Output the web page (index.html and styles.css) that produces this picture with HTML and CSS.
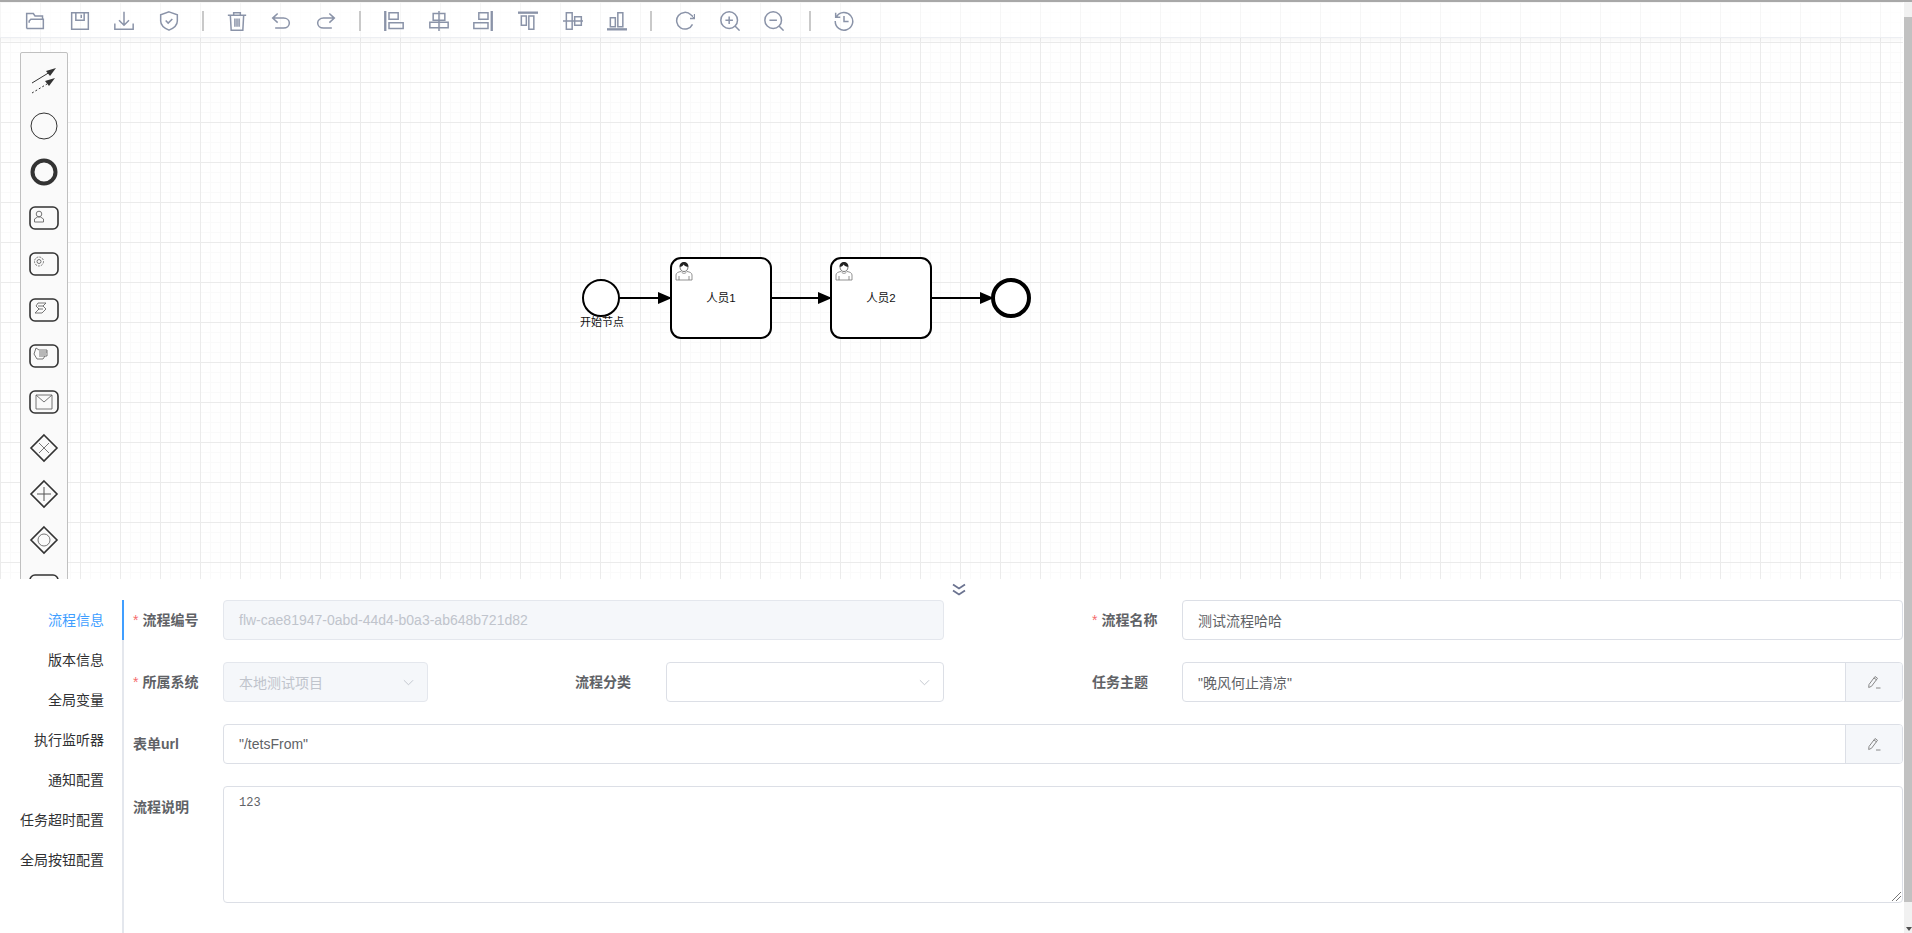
FILE: index.html
```html
<!DOCTYPE html>
<html lang="zh">
<head>
<meta charset="utf-8">
<title>流程设计器</title>
<link rel="stylesheet" href="styles.css">
</head>
<body>
<svg class="defs" width="0" height="0">
  <defs>
    <symbol id="person" viewBox="0 0 20 20">
      <path d="M2 19v-5c0-2 2-3 5-3.500M18 19v-5c0-2-2-3-5-3.500M5 19v-4M15 19v-4M2 19h16" fill="none" stroke="#777" stroke-width=".8"/>
      <path d="M7 10.500c2 2.500 4 2.500 6 0" fill="none" stroke="#777" stroke-width=".8"/>
      <path d="M5.500 6c0-3.500 2-5 4.500-5s4.500 1.500 4.500 5c-2 0-4-1-5-2.500C9 5 7.500 6 5.500 6z" fill="#222"/>
      <path d="M6 6c0 3 2 4.500 4 4.500s4-1.500 4-4.500" fill="none" stroke="#555" stroke-width=".8"/>
    </symbol>
  </defs>
</svg>
<div class="app">
  <div class="content">
    <main class="canvas">
      <div class="toolbar">
        <svg class="tool" viewBox="0 0 24 24"><path d="M2 21V3h8l2 3h9v4M2 21h20V10H7l-2 2v2M2 3"/></svg>
        <svg class="tool" viewBox="0 0 24 24"><path d="M2 2h20v20H2zM7 2v9h10V2M13.500 4.500v4"/></svg>
        <svg class="tool" viewBox="0 0 24 24"><path d="M12 1v16M6 11l6 6 6-6M1 15v7h22v-7"/></svg>
        <svg class="tool" viewBox="0 0 24 24"><path d="M12 1l10 3.500V12c0 5-4 8.500-10 11C6 20.500 2 17 2 12V4.500zM8 11.500l3 3 5-5"/></svg>
        <span class="sep"></span>
        <svg class="tool" viewBox="0 0 24 24"><path d="M1 5h22M8 5V2h8v3M4 5l1 18h14l1-18M9.500 9v10M12 9v10M14.500 9v10"/></svg>
        <svg class="tool" viewBox="0 0 24 24"><path d="M8 3 2 8.500 8 14M2 8.500h13c4 0 7 2.500 7 6s-3 6-7 6H5"/></svg>
        <svg class="tool" viewBox="0 0 24 24"><path d="M16 3l6 5.500-6 5.500M22 8.500H9c-4 0-7 2.500-7 6s3 6 7 6h10"/></svg>
        <span class="sep"></span>
        <svg class="tool" viewBox="0 0 24 24"><path class="bold" d="M1.500 0v24"/><path d="M6 2h11v8H6zM6 14h17v7H6z"/></svg>
        <svg class="tool" viewBox="0 0 24 24"><path d="M12 0v24M5 3h14v8H5zM1 13.500h22V20H1z"/></svg>
        <svg class="tool" viewBox="0 0 24 24"><path class="bold" d="M22.500 0v24"/><path d="M7 2h11v8H7zM1 14h17v7H1z"/></svg>
        <svg class="tool" viewBox="0 0 24 24"><path class="bold" d="M0 2h24"/><path d="M4 6h6v11H4zM13 6h6v16h-6z"/></svg>
        <svg class="tool" viewBox="0 0 24 24"><path d="M0 12h24M4 2h7v20H4zM14 7h8v10h-8z"/></svg>
        <svg class="tool" viewBox="0 0 24 24"><path class="bold" d="M0 22h24"/><path d="M4 8h6v11H4zM13 2h6v17h-6z"/></svg>
        <span class="sep"></span>
        <svg class="tool" viewBox="0 0 24 24"><path d="M21 16a10 10 0 1 1-2-11.500l4 3.500M23.500 3.500V9h-5.500"/></svg>
        <svg class="tool" viewBox="0 0 24 24"><circle cx="11" cy="11" r="10"/><path d="M18 18l5.500 5.500M6.500 11h9M11 6.500v9"/></svg>
        <svg class="tool" viewBox="0 0 24 24"><circle cx="11" cy="11" r="10"/><path d="M18 18l5.500 5.500M6.500 11h9"/></svg>
        <span class="sep late"></span>
        <svg class="tool" viewBox="0 0 24 24"><path d="M3 7A10.500 10.500 0 1 1 1.500 12M2 2v5.500h5.500M12 6v6.500h5.500"/></svg>
      </div>

      <aside class="palette">
        <svg class="pal-item" viewBox="0 0 30 30"><path d="M3 18 21 7" fill="none" stroke="#333"/><path d="M27 3 17 6l4 5zM26 13l-10 3 4 5z" fill="#333"/><path d="M3 28l15-9" fill="none" stroke="#333" stroke-dasharray="2 2"/></svg>
        <svg class="pal-item" viewBox="0 0 30 30"><circle cx="15" cy="15" r="13" fill="none" stroke="#333"/></svg>
        <svg class="pal-item" viewBox="0 0 30 30"><circle cx="15" cy="15" r="11.500" fill="none" stroke="#333" stroke-width="4"/></svg>
        <svg class="pal-item" viewBox="0 0 30 30"><rect x="1" y="4" width="28" height="22" rx="5" class="pal-task"/><circle cx="10" cy="11" r="2.800" class="pal-mark"/><path d="M5.500 19v-3l3-2h3l3 2v3z" class="pal-mark"/></svg>
        <svg class="pal-item" viewBox="0 0 30 30"><rect x="1" y="4" width="28" height="22" rx="5" class="pal-task"/><circle cx="10" cy="12.500" r="4.500" class="pal-mark" stroke-dasharray="2 1"/><circle cx="10" cy="12.500" r="2" class="pal-mark"/></svg>
        <svg class="pal-item" viewBox="0 0 30 30"><rect x="1" y="4" width="28" height="22" rx="5" class="pal-task"/><path d="M9 8h8l-3 3 3 3-4 4H6l4-4-3-3zM9 11h5M9 14h5" class="pal-mark"/></svg>
        <svg class="pal-item" viewBox="0 0 30 30"><rect x="1" y="4" width="28" height="22" rx="5" class="pal-task"/><path d="M5 13l2-6 3 2h8v6h-2l-2 3H8zM10 11h8M10 13h7M10 15h6" class="pal-mark"/></svg>
        <svg class="pal-item" viewBox="0 0 30 30"><rect x="1" y="4" width="28" height="22" rx="5" class="pal-task"/><path d="M7 8h16v14H7zM7 8l8 7 8-7" class="pal-mark"/></svg>
        <svg class="pal-item" viewBox="0 0 30 30"><path d="M15 2l13 13-13 13L2 15z" class="pal-task"/><path d="M10 10l10 10M20 10 10 20" class="pal-mark"/></svg>
        <svg class="pal-item" viewBox="0 0 30 30"><path d="M15 2l13 13-13 13L2 15z" class="pal-task"/><path d="M15 8v14M8 15h14" fill="none" stroke="#555"/></svg>
        <svg class="pal-item" viewBox="0 0 30 30"><path d="M15 2l13 13-13 13L2 15z" class="pal-task"/><circle cx="15" cy="15" r="6" class="pal-mark"/></svg>
        <svg class="pal-item" viewBox="0 0 30 30"><rect x="1" y="4" width="28" height="22" rx="5" class="pal-task"/></svg>
      </aside>

      <svg class="diagram" width="470" height="100" viewBox="0 0 470 100">
        <defs>
          <marker id="arrow" viewBox="0 0 14 14" refX="13" refY="7" markerWidth="14" markerHeight="14" markerUnits="userSpaceOnUse" orient="auto"><path d="M0 1l14 6-14 6z" fill="#000"/></marker>
        </defs>
        <g fill="none" stroke="#000" stroke-width="2">
          <path d="M37 44h52" marker-end="url(#arrow)"/>
          <path d="M189 44h60" marker-end="url(#arrow)"/>
          <path d="M349 44h62" marker-end="url(#arrow)"/>
          <circle cx="19" cy="44" r="18" fill="#fff"/>
          <rect x="89" y="4" width="100" height="80" rx="10" fill="#fff"/>
          <rect x="249" y="4" width="100" height="80" rx="10" fill="#fff"/>
          <circle cx="429" cy="44" r="18" fill="#fff" stroke-width="4"/>
        </g>
        <use href="#person" x="92" y="7" width="20" height="20"/>
        <use href="#person" x="252" y="7" width="20" height="20"/>
        <text class="label" x="139" y="48" text-anchor="middle">人员1</text>
        <text class="label" x="299" y="48" text-anchor="middle">人员2</text>
        <text class="label small" x="20" y="72" text-anchor="middle">开始节点</text>
      </svg>
    </main>

    <section class="panel">
      <div class="collapse">
        <svg viewBox="0 0 16 14" width="16" height="14"><path d="M2 1.500l6 4 6-4M2 7.500l6 4 6-4" fill="none" stroke="#6b7390" stroke-width="1.800"/></svg>
      </div>
      <div class="panel-body">
        <nav class="tabs">
          <a class="tab active">流程信息</a>
          <a class="tab">版本信息</a>
          <a class="tab">全局变量</a>
          <a class="tab">执行监听器</a>
          <a class="tab">通知配置</a>
          <a class="tab">任务超时配置</a>
          <a class="tab">全局按钮配置</a>
        </nav>
        <form class="form">
          <div class="row">
            <div class="field f-left">
              <label class="lbl"><i>*</i>流程编号</label>
              <div class="ctl disabled">flw-cae81947-0abd-44d4-b0a3-ab648b721d82</div>
            </div>
            <div class="field f-right">
              <label class="lbl"><i>*</i>流程名称</label>
              <div class="ctl">测试流程哈哈</div>
            </div>
          </div>
          <div class="row">
            <div class="field f-left">
              <div class="field f-sys">
                <label class="lbl"><i>*</i>所属系统</label>
                <div class="ctl disabled sel">本地测试项目<svg class="chev" viewBox="0 0 12 7"><path d="M1 1l5 5 5-5"/></svg></div>
              </div>
              <div class="field f-cat">
                <label class="lbl">流程分类</label>
                <div class="ctl sel"><svg class="chev" viewBox="0 0 12 7"><path d="M1 1l5 5 5-5"/></svg></div>
              </div>
            </div>
            <div class="field f-right">
              <label class="lbl">任务主题</label>
              <div class="ctl group"><span class="val">"晚风何止清凉"</span><span class="addon"><svg viewBox="0 0 14 14" width="14" height="14"><path d="M2 9.500 8 1.500l2.500 1.800-6 8-2.800 1.200zM7 3l2.500 1.800M9 13h4.500" fill="none" stroke="#888"/></svg></span></div>
            </div>
          </div>
          <div class="row">
            <div class="field f-full">
              <label class="lbl">表单url</label>
              <div class="ctl group"><span class="val">"/tetsFrom"</span><span class="addon"><svg viewBox="0 0 14 14" width="14" height="14"><path d="M2 9.500 8 1.500l2.500 1.800-6 8-2.800 1.200zM7 3l2.500 1.800M9 13h4.500" fill="none" stroke="#888"/></svg></span></div>
            </div>
          </div>
          <div class="row">
            <div class="field f-full top">
              <label class="lbl lbl-top">流程说明</label>
              <div class="ctl area">123<svg class="grip" viewBox="0 0 9 9"><path d="M0 9l9-9M4 9l5-5"/></svg></div>
            </div>
          </div>
        </form>
      </div>
    </section>
  </div>
  <div class="scrollbar"><span class="thumb"></span><span class="arrow"></span></div>
</div>
</body>
</html>
```
FILE: styles.css
```css
* { box-sizing: border-box; }
html, body { margin: 0; height: 100%; overflow: hidden; }
body { background: #fff; font-family: "Liberation Sans", "Noto Sans CJK SC", sans-serif; color: #606266; }
.defs { position: absolute; }
.app { height: 933px; width: 1912px; display: flex; border-top: 2px solid #a8a8a8; }
.content { flex: 1; min-width: 0; display: flex; flex-direction: column; }

.canvas {
  position: relative; height: 577px; flex: none; overflow: hidden; margin-right: 1px;
  background-color: #fff;
  background-image:
    linear-gradient(#ebebeb 1px, transparent 1px),
    linear-gradient(90deg, #ebebeb 1px, transparent 1px),
    linear-gradient(#fafafa 1px, transparent 1px),
    linear-gradient(90deg, #fafafa 1px, transparent 1px);
  background-size: 40px 40px, 40px 40px, 10px 10px, 10px 10px;
}
.toolbar {
  height: 36px; display: flex; align-items: center; padding-left: 25px; padding-top: 2px;
  border-bottom: 1px solid #eceef2; box-shadow: 0 2px 4px rgba(0,0,0,.04);
  background: rgba(255,255,255,.55);
}
.tool { width: 20px; height: 20px; margin-right: 24.7px; flex: none; fill: none; stroke: #8a93a8; stroke-width: 1.800; }
.tool .bold { stroke-width: 2.800; }
.sep { width: 2px; height: 20px; background: #c9c9c9; margin-left: -2px; margin-right: 23px; flex: none; }
.sep.late { margin-left: 0; }
.palette {
  position: absolute; left: 20px; top: 50px; width: 48px; height: 560px;
  background: #fafafa; border: 1px solid #c0c0c0; border-radius: 2px;
  display: flex; flex-direction: column; align-items: center; padding-top: 12px; gap: 16px;
}
.pal-item { width: 30px; height: 30px; flex: none; }
.pal-task { fill: none; stroke: #333; stroke-width: 1.600; }
.pal-mark { fill: none; stroke: #666; stroke-width: .9; }
.diagram { position: absolute; left: 582px; top: 252px; overflow: visible; }
.label { font: 11.500px "Liberation Sans", "Noto Sans CJK SC", sans-serif; fill: #111; stroke: none; }
.label.small { font-size: 11px; }

.panel { flex: 1; min-height: 0; display: flex; flex-direction: column; background: #fff; }
.collapse { height: 21px; flex: none; display: flex; justify-content: center; align-items: center; padding-left: 14px; }
.panel-body { flex: 1; display: flex; min-height: 0; }
.tabs { width: 124px; flex: none; border-right: 2px solid #e4e7ed; display: flex; flex-direction: column; }
.tab { height: 40px; line-height: 40px; text-align: right; padding-right: 18px; font-size: 14px; color: #303133; position: relative; }
.tab.active { color: #409eff; }
.tab.active::after { content: ""; position: absolute; right: -2px; top: 0; bottom: 0; width: 2px; background: #409eff; }

.form { flex: 1; min-width: 0; padding-left: 9px; padding-right: 1px; }
.row { display: flex; height: 62px; }
.field { display: flex; align-items: center; height: 40px; min-width: 0; }
.field.top { align-items: flex-start; height: 117px; }
.f-left { width: 811px; flex: none; }
.f-right { flex: 1; padding-left: 148px; }
.f-full { flex: 1; }
.f-sys { width: 442px; flex: none; }
.f-sys .ctl { flex: none; width: 205px; }
.f-cat { flex: 1; }
.f-cat .lbl { width: 91px; }
.lbl { width: 90px; flex: none; padding-bottom: 2px; font-size: 14px; font-weight: 700; color: #606266; white-space: nowrap; }
.lbl-top { padding-top: 10px; }
.lbl i { color: #f56c6c; font-style: normal; margin-right: 4px; font-weight: 400; }
.ctl { flex: 1; min-width: 0; height: 40px; border: 1px solid #dcdfe6; border-radius: 4px; padding: 0 15px; display: flex; align-items: center; font-size: 14px; color: #606266; background: #fff; position: relative; white-space: nowrap; }
.disabled { background: #f5f7fa; border-color: #e4e7ed; color: #c0c4cc; }
.sel { padding-right: 13px; }
.chev { width: 11px; height: 7px; fill: none; stroke: #c0c4cc; stroke-width: 1; margin-left: auto; }
.group { padding: 0; overflow: hidden; }
.val { flex: 1; padding: 0 15px; }
.addon { width: 57px; height: 100%; flex: none; background: #f5f7fa; border-left: 1px solid #dcdfe6; display: flex; align-items: center; justify-content: center; }
.area { height: 117px; align-items: flex-start; padding-top: 6px; font-family: "Liberation Mono", monospace; font-size: 12px; line-height: 20px; color: #606266; }
.grip { position: absolute; right: 1px; bottom: 1px; width: 9px; height: 9px; fill: none; stroke: #777; stroke-width: 1; }

.scrollbar { width: 8px; flex: none; display: flex; flex-direction: column; background: #f1f1f1; padding-top: 15px; }
.thumb { height: 885px; background: #c1c1c1; flex: none; }
.arrow { margin: auto 0 2px auto; width: 0; height: 0; border: 3px solid transparent; border-top: 4px solid #505050; border-bottom: 0; }
```
